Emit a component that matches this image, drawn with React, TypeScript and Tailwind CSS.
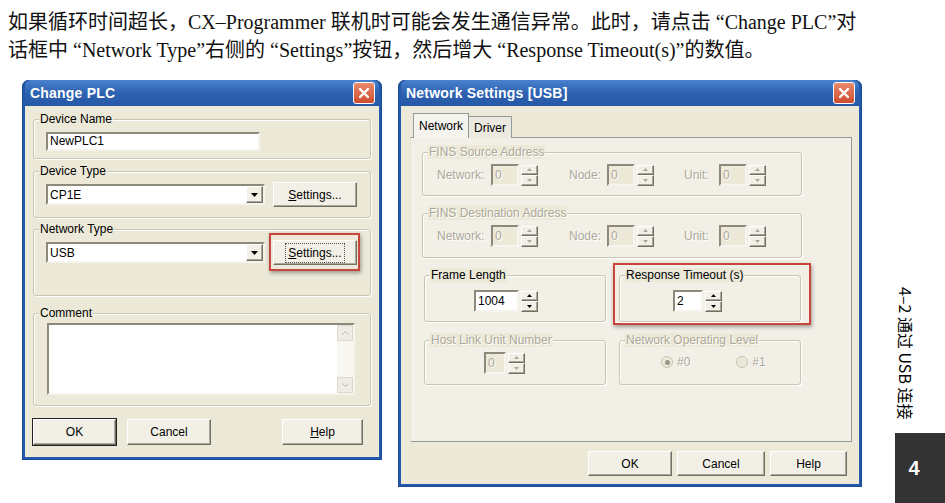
import type { ReactNode } from 'react'

const face = 'bg-[#ECE9D8]'
const raised =
  'border border-t-white border-l-white border-b-[#716F64] border-r-[#716F64] shadow-[inset_-1px_-1px_0_#ACA899]'
const sunken =
  'border-2 border-t-[#8d8a7c] border-l-[#8d8a7c] border-b-[#f6f4ec] border-r-[#f6f4ec]'
const dim = 'text-[#ACA899] [text-shadow:1px_1px_0_#fff]'

function CloseBtn() {
  return (
    <div className="w-[22px] h-[22px] rounded-[3px] border border-white bg-gradient-to-b from-[#e98a6d] to-[#cf4a2c] flex items-center justify-center">
      <svg width="12" height="12" viewBox="0 0 12 12">
        <path d="M2 2 L10 10 M10 2 L2 10" stroke="#fff" strokeWidth="2.4" strokeLinecap="round" />
      </svg>
    </div>
  )
}

function TitleBar({ title }: { title: string }) {
  return (
    <div className="h-[26px] flex items-center justify-between pl-[5px] pr-[4px] rounded-t-[6px] bg-gradient-to-b from-[#4a82cf] via-[#2d62b0] to-[#2658a6]">
      <span className="text-white font-bold text-[14px] tracking-[0.2px]">{title}</span>
      <CloseBtn />
    </div>
  )
}

function Btn({
  children,
  className = '',
  isDefault = false,
}: {
  children: ReactNode
  className?: string
  isDefault?: boolean
}) {
  return (
    <div
      className={`${isDefault ? 'outline outline-1 outline-[#222]' : ''} ${raised} bg-[#F2F0E6] flex items-center justify-center text-[12px] text-black ${className}`}
    >
      {children}
    </div>
  )
}

function Group({
  label,
  disabled = false,
  className = '',
  children,
}: {
  label: string
  disabled?: boolean
  className?: string
  children?: ReactNode
}) {
  return (
    <div className={`relative border border-[#C9C5B3] rounded-[3px] shadow-[1px_1px_0_#fff,inset_1px_1px_0_#fff] ${className}`}>
      <span
        className={`absolute -top-[8px] left-[5px] px-[1px] ${face} text-[12px] leading-[14px] ${disabled ? dim : 'text-black'}`}
      >
        {label}
      </span>
      {children}
    </div>
  )
}

function Arrow({ up, disabled }: { up: boolean; disabled?: boolean }) {
  return (
    <svg width="5" height="3" viewBox="0 0 5 3">
      <path d={up ? 'M2.5 0 L5 3 L0 3 Z' : 'M0 0 L5 0 L2.5 3 Z'} fill={disabled ? '#ACA899' : '#000'} />
    </svg>
  )
}

function Spin({ disabled = false }: { disabled?: boolean }) {
  return (
    <div className="flex flex-col w-[17px] h-[21px] ml-[2px]">
      <div className={`flex-1 ${raised} bg-[#F2F0E6] flex items-center justify-center`}>
        <Arrow up disabled={disabled} />
      </div>
      <div className={`flex-1 ${raised} bg-[#F2F0E6] flex items-center justify-center`}>
        <Arrow up={false} disabled={disabled} />
      </div>
    </div>
  )
}

function Num({
  value,
  w,
  disabled = false,
}: {
  value: string
  w: string
  disabled?: boolean
}) {
  return (
    <div className="flex items-center">
      <div
        className={`${sunken} ${w} h-[22px] ${disabled ? 'bg-[#ECE9D8] ' + dim : 'bg-white text-black'} text-[12px] leading-[18px] pl-[2px]`}
      >
        {value}
      </div>
      <Spin disabled={disabled} />
    </div>
  )
}

function Combo({ value }: { value: string }) {
  return (
    <div className={`${sunken} bg-white w-[219px] h-[21px] flex items-center justify-between`}>
      <span className="text-[12px] pl-[2px]">{value}</span>
      <div className={`${raised} bg-[#F2F0E6] w-[17px] h-[17px] flex items-center justify-center`}>
        <svg width="7" height="4" viewBox="0 0 7 4">
          <path d="M0 0 L7 0 L3.5 4 Z" fill="#000" />
        </svg>
      </div>
    </div>
  )
}

function FinsRow() {
  return (
    <div className={`flex items-center pt-[11px] text-[12px] ${dim}`}>
      <span className="w-[54px] pl-[14px] box-content">Network:</span>
      <Num value="0" w="w-[28px]" disabled />
      <span className="w-[38px] ml-[31px]">Node:</span>
      <Num value="0" w="w-[28px]" disabled />
      <span className="w-[35px] ml-[30px]">Unit:</span>
      <Num value="0" w="w-[28px]" disabled />
    </div>
  )
}

function Radio({ checked }: { checked: boolean }) {
  return (
    <span className="w-[12px] h-[12px] rounded-full border border-[#c9c5b3] bg-[#ECE9D8] flex items-center justify-center">
      {checked && <span className="w-[5px] h-[5px] rounded-full bg-[#9a968a]" />}
    </span>
  )
}

function ChangePlc() {
  return (
    <div className="w-[360px] h-[380px] flex flex-col rounded-t-[7px] bg-[#2559ab] p-[3px] pt-0 shadow-[inset_0_0_0_1px_#1b4a94]">
      <TitleBar title="Change PLC" />
      <div className={`flex-1 ${face} px-[8px] pt-[13px] text-[12px]`}>
        <Group label="Device Name" className="h-[40px] pt-[12px] pl-[12px]">
          <div className={`${sunken} bg-white w-[214px] h-[19px] text-[12px] leading-[15px] pl-[2px]`}>NewPLC1</div>
        </Group>
        <Group label="Device Type" className="h-[47px] mt-[12px] pt-[10px] pl-[12px]">
          <div className="flex items-center gap-[8px]">
            <Combo value="CP1E" />
            <Btn className="w-[84px] h-[25px]">
              <span>
                <u>S</u>ettings...
              </span>
            </Btn>
          </div>
        </Group>
        <Group label="Network Type" className="h-[67px] mt-[11px] pt-[10px] pl-[12px]">
          <div className="flex items-center gap-[8px]">
            <Combo value="USB" />
            <div className="relative">
              <Btn className="w-[84px] h-[25px]">
                <span className="outline outline-1 outline-dotted outline-[#555] px-[2px]">
                  <u>S</u>ettings...
                </span>
              </Btn>
              <div className="absolute -left-[4px] -right-[3px] -top-[7px] -bottom-[6px] border-2 border-[#c9443a] shadow-[1px_2px_4px_rgba(0,0,0,0.35)]" />
            </div>
          </div>
        </Group>
        <Group label="Comment" className="h-[93px] mt-[17px] pt-[9px] pl-[13px]">
          <div className={`${sunken} bg-white w-[308px] h-[72px] flex justify-end`}>
            <div className="w-[16px] h-full bg-[#F7F6F0] flex flex-col justify-between">
              <div className="h-[16px] bg-[#EEEde5] border border-[#dcdad0] flex items-center justify-center">
                <svg width="7" height="4" viewBox="0 0 7 4">
                  <path d="M0.5 3.5 L3.5 0.5 L6.5 3.5" stroke="#b8b6ac" fill="none" />
                </svg>
              </div>
              <div className="h-[16px] bg-[#EEEde5] border border-[#dcdad0] flex items-center justify-center">
                <svg width="7" height="4" viewBox="0 0 7 4">
                  <path d="M0.5 0.5 L3.5 3.5 L6.5 0.5" stroke="#b8b6ac" fill="none" />
                </svg>
              </div>
            </div>
          </div>
        </Group>
        <div className="flex mt-[13px]">
          <Btn isDefault className="w-[83px] h-[26px]">OK</Btn>
          <Btn className="w-[84px] h-[26px] ml-[11px]">Cancel</Btn>
          <Btn className="w-[81px] h-[26px] ml-[71px]">
            <span>
              <u>H</u>elp
            </span>
          </Btn>
        </div>
      </div>
    </div>
  )
}

function NetworkSettings() {
  return (
    <div className="w-[464px] h-[407px] flex flex-col rounded-t-[7px] bg-[#2559ab] p-[3px] pt-0 shadow-[inset_0_0_0_1px_#1b4a94]">
      <TitleBar title="Network Settings [USB]" />
      <div className={`flex-1 ${face} pt-[7px] text-[12px]`}>
        <div className="flex items-end pl-[12px] h-[25px]">
          <div className="h-[25px] px-[5px] pt-[3px] border border-b-0 border-[#919B9C] bg-[#F4F3EE] relative z-10">Network</div>
          <div className="h-[22px] px-[5px] pt-[2px] border border-b-0 border-l-0 border-[#919B9C] bg-[#ECEAE0]">Driver</div>
        </div>
        <div className="ml-[9px] w-[442px] h-[305px] -mt-px border border-t-[#919B9C] border-l-[#e8e6dc] border-r-[#919B9C] border-b-[#919B9C] bg-[#F1EFE6] pt-[14px]">
          <Group label="FINS Source Address" disabled className="ml-[11px] w-[380px] h-[44px]">
            <FinsRow />
          </Group>
          <Group label="FINS Destination Address" disabled className="ml-[11px] w-[380px] h-[45px] mt-[17px]">
            <FinsRow />
          </Group>
          <div className="flex mt-[17px] ml-[13px]">
            <Group label="Frame Length" className="w-[182px] h-[47px] pt-[14px] pl-[49px]">
              <Num value="1004" w="w-[45px]" />
            </Group>
            <div className="relative ml-[13px]">
              <Group label="Response Timeout (s)" className="w-[182px] h-[47px] pt-[14px] pl-[53px]">
                <Num value="2" w="w-[30px]" />
              </Group>
              <div className="absolute -left-[6px] -right-[10px] -top-[12px] -bottom-[3px] border-2 border-[#c9443a] shadow-[1px_2px_4px_rgba(0,0,0,0.35)]" />
            </div>
          </div>
          <div className="flex mt-[18px] ml-[13px]">
            <Group label="Host Link Unit Number" disabled className="w-[182px] h-[45px] pt-[11px] pl-[59px]">
              <Num value="0" w="w-[22px]" disabled />
            </Group>
            <Group label="Network Operating Level" disabled className="w-[182px] h-[45px] ml-[13px] pt-[12px] pl-[41px]">
              <div className={`flex items-center text-[12px] ${dim}`}>
                <Radio checked />
                <span className="ml-[4px]">#0</span>
                <span className="ml-[46px]">
                  <Radio checked={false} />
                </span>
                <span className="ml-[4px]">#1</span>
              </div>
            </Group>
          </div>
        </div>
        <div className="flex justify-end pr-[12px] mt-[9px] gap-[5px]">
          <Btn className="w-[84px] h-[25px]">OK</Btn>
          <Btn className="w-[88px] h-[25px]">Cancel</Btn>
          <Btn className="w-[77px] h-[25px]">Help</Btn>
        </div>
      </div>
    </div>
  )
}

export default function App() {
  return (
    <div className="w-[945px] h-[503px] bg-white overflow-hidden font-['Liberation_Sans',Arial,sans-serif]">
      <div className="pl-[8px] pt-[8px] text-[20px] leading-[28px] text-[#111] font-['Liberation_Serif','Noto_Sans_CJK_SC',serif] whitespace-nowrap">
        <div>如果循环时间超长，CX–Programmer 联机时可能会发生通信异常。此时，请点击 “Change PLC”对</div>
        <div>话框中 “Network Type”右侧的 “Settings”按钮，然后增大 “Response Timeout(s)”的数值。</div>
      </div>
      <div className="flex mt-[16px] ml-[22px]">
        <ChangePlc />
        <div className="ml-[16px]">
          <NetworkSettings />
        </div>
        <div className="ml-[33px] w-[50px] flex flex-col">
          <div className="mt-[207px] ml-[1px] w-[20px] h-[136px] text-[16px] leading-[20px] text-black font-['Noto_Sans_CJK_SC',sans-serif] [writing-mode:vertical-rl] [text-orientation:sideways] whitespace-nowrap">
            4–2 通过 USB 连接
          </div>
          <div className="mt-[10px] w-[50px] h-[70px] bg-[#333] flex items-center justify-center">
            <span className="text-white font-bold text-[20px] -ml-[12px]">4</span>
          </div>
        </div>
      </div>
    </div>
  )
}
